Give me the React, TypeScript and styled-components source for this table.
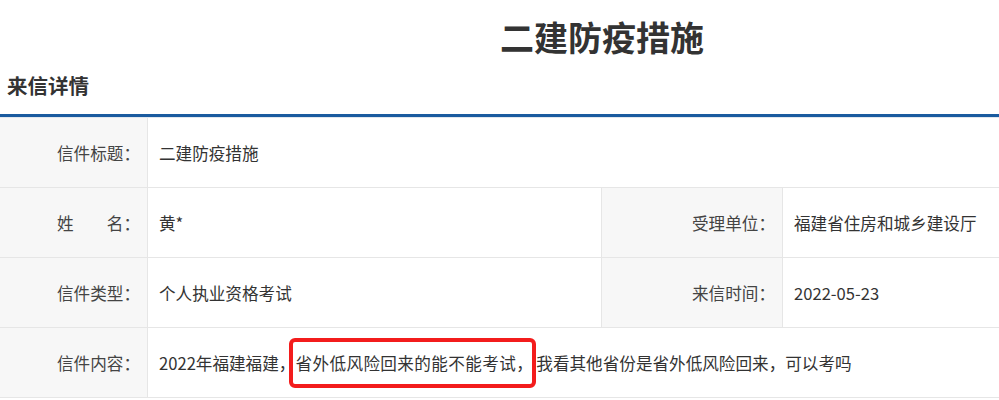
import React from "react";
import styled, { createGlobalStyle } from "styled-components";

const Global = createGlobalStyle`
  html, body { margin: 0; padding: 0; background: #fff; }
  body {
    font-family: "Noto Sans CJK SC", "Noto Sans", "Liberation Sans", sans-serif;
    color: #333;
  }
`;

const Page = styled.div`
  width: 999px;
  overflow: hidden;
`;

const Title = styled.h1`
  margin: 0;
  padding-left: 500px;
  height: 76px;
  line-height: 74px;
  font-size: 34px;
  font-weight: 700;
  color: #333;
  white-space: nowrap;
`;

const SectionHead = styled.h2`
  margin: 0;
  height: 38px;
  box-sizing: border-box;
  padding-left: 7px;
  line-height: 18px;
  font-size: 20.5px;
  font-weight: 700;
  color: #333;
`;

const Rule = styled.div`
  height: 3px;
  background: #1a5b9f;
  border-bottom: 1px solid #e1e7ee;
`;

const Table = styled.div`
  display: grid;
  grid-template-columns: 148px 454px 181px 1fr;
`;

const Label = styled.div`
  box-sizing: border-box;
  height: 70px;
  display: flex;
  align-items: center;
  justify-content: flex-end;
  padding-right: 7px;
  background: #f7f7f7;
  border-bottom: 1px solid #e6e6e6;
  border-right: 1px solid #e6e6e6;
  font-size: 16.6px;
  color: #444;
  white-space: pre;
`;

const Value = styled.div<{ $span?: number; $edge?: boolean }>`
  box-sizing: border-box;
  height: 70px;
  display: flex;
  align-items: center;
  padding-left: 11px;
  border-bottom: 1px solid #e6e6e6;
  border-right: ${(p) => (p.$edge ? "1px solid #e6e6e6" : "none")};
  grid-column: ${(p) => (p.$span ? `span ${p.$span}` : "auto")};
  font-size: 16.6px;
  color: #333;
  white-space: pre;
`;

const Highlight = styled.span`
  position: relative;
  letter-spacing: 0.4px;
  padding-right: 3px;
  &::after {
    content: "";
    position: absolute;
    left: -6px;
    right: 0;
    top: -13px;
    bottom: -13px;
    border: 4px solid #f31c1c;
    border-radius: 6px;
    pointer-events: none;
  }
`;

export default function App() {
  return (
    <Page>
      <Global />
      <Title>二建防疫措施</Title>
      <SectionHead>来信详情</SectionHead>
      <Rule />
      <Table>
        <Label>信件标题：</Label>
        <Value $span={3}>二建防疫措施</Value>

        <Label>姓　　名：</Label>
        <Value $edge>黄*</Value>
        <Label>受理单位：</Label>
        <Value>福建省住房和城乡建设厅</Value>

        <Label>信件类型：</Label>
        <Value $edge>个人执业资格考试</Value>
        <Label>来信时间：</Label>
        <Value>2022-05-23</Value>

        <Label>信件内容：</Label>
        <Value $span={3}>
          2022年福建福建，<Highlight>省外低风险回来的能不能考试，</Highlight>我看其他省份是省外低风险回来，可以考吗
        </Value>
      </Table>
    </Page>
  );
}
